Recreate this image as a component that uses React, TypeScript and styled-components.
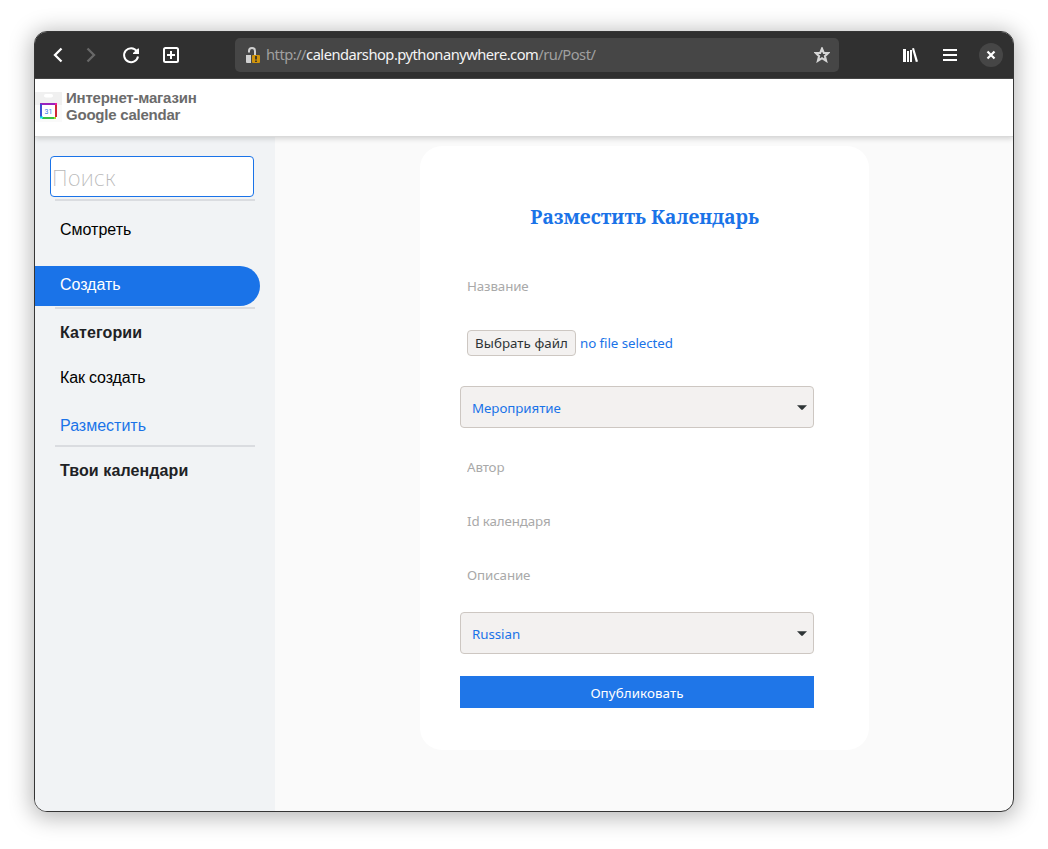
import React from 'react';
import styled, { createGlobalStyle } from 'styled-components';

const blue = '#1a73e8';
const ui = '"Noto Sans", "Open Sans", sans-serif';
const arial = '"Liberation Sans", Arial, sans-serif';

const GlobalStyle = createGlobalStyle`
  * { box-sizing: border-box; }
  body { margin: 0; background: #fff; overflow: hidden; }
  button, input { margin: 0; }
`;

const Desktop = styled.div`
  height: 849px;
  padding: 31px 34px 37px;
`;

const Window = styled.div`
  height: 781px;
  display: flex;
  flex-direction: column;
  border: 1px solid #353535;
  border-radius: 13px;
  overflow: hidden;
  background: #fafafa;
  box-shadow: 0 3px 22px 3px rgba(0, 0, 0, 0.28);
`;

const Toolbar = styled.header`
  height: 47px;
  flex: none;
  display: flex;
  align-items: center;
  padding: 0 10px 0 11px;
  background: #303030;
  border-bottom: 1px solid #484848;
`;

const ToolButton = styled.button<{ $gap?: number; $dim?: boolean }>`
  width: 24px;
  height: 24px;
  flex: none;
  display: flex;
  padding: 0;
  border: 0;
  margin-left: ${(p) => p.$gap ?? 0}px;
  background: none;
  color: ${(p) => (p.$dim ? '#686868' : '#fff')};
`;

const CloseButton = styled(ToolButton)`
  border-radius: 50%;
  background: #464646;
`;

const AddressBar = styled.div`
  width: 604px;
  height: 34px;
  flex: none;
  display: flex;
  align-items: center;
  margin-left: 52px;
  padding: 0 9px 0 10px;
  border-radius: 5px;
  background: #464646;
  color: #a0a0a0;
`;

const Url = styled.span`
  flex: 1;
  padding: 0 0 2px 5px;
  font: 14.7px/20px ${ui};
  letter-spacing: -0.5px;
  white-space: nowrap;
`;

const Host = styled.span`
  color: #f4f4f4;
`;

const SiteHeader = styled.div`
  height: 58px;
  flex: none;
  display: flex;
  z-index: 1;
  background: #fff;
  border-bottom: 1px solid #dadada;
  box-shadow: 0 2px 5px rgba(0, 0, 0, 0.15);
`;

const Brand = styled.div`
  padding: 10px 0 0 4px;
  font: bold 15px/17px ${arial};
  letter-spacing: -0.22px;
  color: #6b6b6b;
`;

const LogoBox = styled.div`
  width: 27px;
  padding-top: 13px;
`;

const Page = styled.div`
  flex: 1;
  display: flex;
  min-height: 0;
`;

const Sidebar = styled.nav`
  width: 240px;
  flex: none;
  display: flex;
  flex-direction: column;
  padding-top: 19px;
  background: #f1f3f5;
`;

const Search = styled.input`
  width: 204px;
  height: 41px;
  margin: 0 0 2px 15px;
  padding: 0 2px 0 1px;
  border: 1px solid ${blue};
  border-radius: 4px;
  outline: 0;
  background: #fff;
  font: 200 22px/34px ${ui};
  letter-spacing: 0.4px;
  &::placeholder { color: #b8b8b8; opacity: 1; }
`;

const Rule = styled.hr`
  width: 200px;
  height: 2px;
  flex: none;
  margin: 0 0 0 20px;
  border: 0;
  background: #dadce0;
`;

const NavItem = styled.a<{ $current?: boolean; $height?: number; $shift?: number; $tight?: boolean }>`
  height: ${(p) => p.$height ?? 46}px;
  flex: none;
  padding: ${(p) => p.$shift ?? 0}px 0 0 25px;
  font: 16px ${arial};
  line-height: ${(p) => (p.$height ?? 46) - (p.$shift ?? 0)}px;
  letter-spacing: ${(p) => (p.$tight ? -0.15 : 0)}px;
  color: ${(p) => (p.$current ? blue : '#000')};
`;

const ActiveItem = styled.a`
  width: 225px;
  height: 40px;
  flex: none;
  margin: 7px 0 1px;
  padding-left: 25px;
  border-radius: 0 20px 20px 0;
  background: ${blue};
  color: #fff;
  font: 16px/38px ${arial};
  letter-spacing: -0.05px;
`;

const NavHeading = styled.div`
  height: 46px;
  flex: none;
  padding: 2px 0 0 25px;
  font: bold 16px/44px ${arial};
  letter-spacing: 0.1px;
  color: #202124;
`;

const Main = styled.main`
  flex: 1;
  padding: 9px 0 0 145px;
`;

const Card = styled.form`
  width: 449px;
  height: 604px;
  display: flex;
  flex-direction: column;
  gap: 22px;
  padding: 56px 55px 42px 40px;
  border-radius: 22px;
  background: #fff;
`;

const Title = styled.h1`
  width: 369px;
  height: 46px;
  margin: 0;
  text-align: center;
  font: bold 19.2px/30px "Noto Serif", "Droid Serif", "DejaVu Serif", serif;
  color: ${blue};
  white-space: nowrap;
`;

const Field = styled.input<{ $drop?: number }>`
  height: 32px;
  flex: none;
  padding: ${(p) => p.$drop ?? 0}px 7px 0;
  border: 0;
  outline: 0;
  background: transparent;
  font: 13.33px/20px ${ui};
  letter-spacing: -0.12px;
  &::placeholder { color: #a9a9a9; opacity: 1; }
`;

const FileRow = styled.div`
  height: 40px;
  flex: none;
  display: flex;
  align-items: center;
  gap: 4px;
  padding: 0 7px 2px;
  font: 13.33px/20px ${ui};
  letter-spacing: -0.07px;
  color: ${blue};
`;

const FileButton = styled.button`
  width: 109px;
  height: 26px;
  padding: 0;
  border: 1px solid #cdc7c2;
  border-radius: 4px;
  background: #f3f1f0;
  font: 13.33px/22px ${ui};
  letter-spacing: 0.05px;
  color: #2e3436;
  white-space: nowrap;
`;

const Select = styled.div`
  width: 354px;
  height: 42px;
  flex: none;
  display: flex;
  align-items: center;
  justify-content: space-between;
  padding: 2px 6px 0 11px;
  border: 1px solid #cdc7c2;
  border-radius: 4px;
  background: #f3f1f0;
  color: ${blue};
  font: 13.33px/20px ${ui};
  letter-spacing: -0.05px;
`;

const Submit = styled.button`
  width: 354px;
  height: 32px;
  flex: none;
  padding: 2px 0 0;
  border: 0;
  background: #1f76e8;
  color: #fff;
  font: 13.33px/20px ${ui};
  letter-spacing: 0.1px;
`;

const Stroke = ({ d, width = 2 }: { d: string; width?: number }) => (
  <svg width="24" height="24" viewBox="0 0 24 24" fill="none" stroke="currentColor" strokeWidth={width}>
    <path d={d} />
  </svg>
);

const Caret = () => (
  <svg width="10" height="8" viewBox="0 0 10 8">
    <path d="M0 1.2h10L5.8 5.6Q5 6.4 4.2 5.6Z" fill="#2e3436" />
  </svg>
);

const Lock = () => (
  <svg width="16" height="18" viewBox="0 0 16 18">
    <path d="M4 6.500V5a3 3 0 0 1 6 0v4" fill="none" stroke="#d0d0d0" strokeWidth="2" />
    <path d="M1 9h5v8H2a1 1 0 0 1-1-1z" fill="#d0d0d0" />
    <rect x="7" y="9" width="8" height="8" rx="1" fill="#d0940c" />
    <path d="M10 10h2v3.500h-2zM10 14.500h2V16h-2z" fill="#463c28" />
  </svg>
);

const Logo = () => (
  <svg width="27" height="30" viewBox="0 0 27 30">
    <path d="M0 0h27v30H0z" fill="#fafafa" />
    <path d="M0 0h27v13H0z" fill="#f0f0f0" />
    <rect x="9" y="2" width="9" height="3.5" rx="1.7" fill="#fff" />
    <path d="M5 11h17v16H5z" fill="#fff" />
    <path d="M5 12h17" stroke="#9b22bd" strokeWidth="2" />
    <path d="M6 12v13" stroke="#3c50d2" strokeWidth="2" />
    <path d="M21 13v12" stroke="#cf2836" strokeWidth="2" />
    <path d="M7 26h13" stroke="#37bf43" strokeWidth="2" />
    <path d="M20 12h2" stroke="#f01ba0" strokeWidth="2" />
    <path d="M5 25.5h3" stroke="#12e8e8" strokeWidth="2" />
    <path d="M19 26h2" stroke="#a4dd24" strokeWidth="2" />
    <text x="13.4" y="21.8" textAnchor="middle" fontSize="7" fontFamily="Roboto, sans-serif" fill="#2f7bea">31</text>
  </svg>
);

export default function App() {
  return (
    <Desktop>
      <GlobalStyle />
      <Window>
        <Toolbar>
          <ToolButton aria-label="Back"><Stroke d="M15.500 5.500 9 12l6.500 6.500" width={2.3} /></ToolButton>
          <ToolButton aria-label="Forward" $gap={9} $dim><Stroke d="m8.500 5.500 6.500 6.500-6.500 6.500" width={2.3} /></ToolButton>
          <ToolButton aria-label="Reload" $gap={16}>
            <svg width="24" height="24" viewBox="0 0 24 24">
              <path d="M17.8 8.100A7 7 0 1 0 19 13.500" fill="none" stroke="currentColor" strokeWidth="2" />
              <path d="M19 5.500h1V11h-6v-1z" fill="currentColor" />
            </svg>
          </ToolButton>
          <ToolButton aria-label="New tab" $gap={16}>
            <svg width="24" height="24" viewBox="0 0 24 24" fill="none" stroke="currentColor" strokeWidth="2">
              <rect x="5" y="5" width="14" height="14" rx="1.500" />
              <path d="M12 8v8M8 12h8" />
            </svg>
          </ToolButton>
          <AddressBar>
            <Lock />
            <Url>http://<Host>calendarshop.pythonanywhere.com</Host>/ru/Post/</Url>
            <svg width="16" height="16" viewBox="0 0 16 16">
              <path
                d="M8 1.600 9.800 6h4.500l-3.400 3.100 1.200 4.700L8 11.200l-4.100 2.600 1.200-4.700L1.700 6h4.500z"
                fill="none"
                stroke="#d6d6d6"
                strokeWidth="2.100"
              />
            </svg>
          </AddressBar>
          <ToolButton aria-label="Library" $gap={59}>
            <svg width="24" height="24" viewBox="0 0 24 24" fill="currentColor">
              <path d="M5 6h3v13H5zM9 8h2v11H9zM12 7h2v12h-2zM14 5.400l2-.5L20 18.500l-2.200.5z" />
            </svg>
          </ToolButton>
          <ToolButton aria-label="Menu" $gap={16}><Stroke d="M5 7h14M5 12h14M5 17h14" /></ToolButton>
          <CloseButton aria-label="Close" $gap={17}><Stroke d="m8.500 8.500 7 7M15.500 8.500l-7 7" width={2.2} /></CloseButton>
        </Toolbar>
        <SiteHeader>
          <LogoBox><Logo /></LogoBox>
          <Brand>Интернет-магазин<br />Google calendar</Brand>
        </SiteHeader>
        <Page>
          <Sidebar>
            <Search placeholder="Поиск" />
            <Rule />
            <NavItem $height={58}>Смотреть</NavItem>
            <ActiveItem>Создать</ActiveItem>
            <Rule />
            <NavHeading>Категории</NavHeading>
            <NavItem $tight>Как создать</NavItem>
            <NavItem $current $height={44} $shift={5}>Разместить</NavItem>
            <Rule />
            <NavHeading>Твои календари</NavHeading>
          </Sidebar>
          <Main>
            <Card>
              <Title>Разместить Календарь</Title>
              <Field placeholder="Название" />
              <FileRow><FileButton type="button">Выбрать файл</FileButton>no file selected</FileRow>
              <Select>Мероприятие<Caret /></Select>
              <Field placeholder="Автор" $drop={2} />
              <Field placeholder="Id календаря" $drop={2} />
              <Field placeholder="Описание" $drop={2} />
              <Select>Russian<Caret /></Select>
              <Submit type="button">Опубликовать</Submit>
            </Card>
          </Main>
        </Page>
      </Window>
    </Desktop>
  );
}
